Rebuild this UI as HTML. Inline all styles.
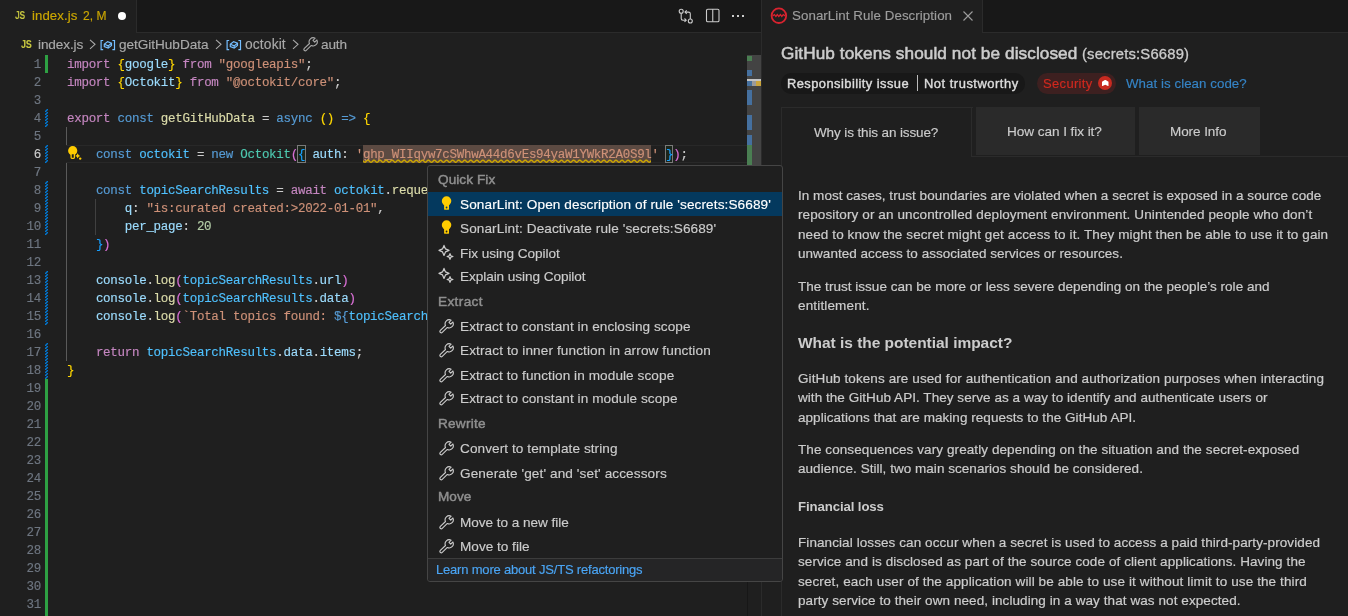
<!DOCTYPE html><html><head><meta charset="utf-8"><style>
*{margin:0;padding:0;box-sizing:border-box}
html,body{width:1348px;height:616px;overflow:hidden;background:#1f1f1f;font-family:"Liberation Sans",sans-serif;color:#cccccc}
div{position:absolute}
svg{position:absolute}
.mono{font-family:"Liberation Mono",monospace;font-size:12.5px;letter-spacing:-0.285px;white-space:pre;line-height:18px;will-change:transform;-webkit-text-stroke:0.15px currentColor}
.ln{left:0;width:41px;text-align:right;color:#6e7681}
.cl{left:67px;height:18px}
.k{color:#c586c0}.s{color:#569cd6}.v{color:#9cdcfe}.f{color:#dcdcaa}.str{color:#ce9178}.c{color:#4ec9b0}.n{color:#b5cea8}
.cst{color:#4fc1ff}.b1{color:#ffd700}.b2{color:#da70d6}.b3{color:#179fff}.p{color:#cccccc}
.t{white-space:pre;will-change:transform}
</style></head><body>
<div style="left:0;top:0;width:761px;height:33px;background:#181818;border-bottom:1px solid #2b2b2b"></div>
<div style="left:0;top:0;width:137px;height:33px;background:#1f1f1f;border-right:1px solid #2b2b2b"></div>
<div class="t" style="left:14.6px;top:10.3px;font-family:'Liberation Sans';font-size:11.8px;line-height:11.8px;font-weight:700;color:#cbcb41;transform:scaleX(0.72);transform-origin:0 0;letter-spacing:-0.3px">JS</div>
<div class="t" style="left:32.04px;top:9.40px;font-family:'Liberation Sans';font-size:13.2px;font-weight:400;line-height:13.2px;color:#cca700;letter-spacing:0.083px;-webkit-text-stroke:0.15px #cca700">index.js</div>
<div class="t" style="left:83.20px;top:10.40px;font-family:'Liberation Sans';font-size:12px;font-weight:400;line-height:12px;color:#cca700;letter-spacing:0.019px;-webkit-text-stroke:0.15px #cca700">2, M</div>
<div style="left:117.7px;top:11.7px;width:8.6px;height:8.6px;border-radius:50%;background:#ffffff"></div>
<svg style="left:678px;top:8px" width="16" height="16" viewBox="0 0 16 16" fill="none" stroke="#cccccc" stroke-width="1.1">
<circle cx="3.2" cy="3.3" r="2"/><circle cx="12.3" cy="13" r="2"/>
<path d="M3.2 5.3 V10.5 Q3.2 12.2 5 12.2 H8"/><path d="M6.5 10.5 L8.2 12.2 L6.5 13.9"/>
<path d="M12.3 11 V5.8 Q12.3 4.1 10.5 4.1 H7"/><path d="M8.7 2.4 L7 4.1 L8.7 5.8"/>
</svg>
<svg style="left:705px;top:8px" width="16" height="16" viewBox="0 0 16 16" fill="none" stroke="#cccccc" stroke-width="1.1">
<rect x="1.5" y="1.2" width="12.5" height="12.5" rx="1.3"/><path d="M7.75 1.2 V13.7"/>
</svg>
<div style="left:731.5px;top:14.7px;width:2px;height:2px;background:#cccccc;box-shadow:5px 0 0 #cccccc,10px 0 0 #cccccc"></div>
<div class="t" style="left:20.8px;top:39.2px;font-family:'Liberation Sans';font-size:11.8px;line-height:11.8px;font-weight:700;color:#cbcb41;transform:scaleX(0.76);transform-origin:0 0;letter-spacing:-0.3px">JS</div>
<div class="t" style="left:38.02px;top:37.90px;font-family:'Liberation Sans';font-size:13.6px;font-weight:400;line-height:13.6px;color:#a9a9a9;letter-spacing:-0.113px;-webkit-text-stroke:0.15px #a9a9a9">index.js</div>
<svg style="left:89.3px;top:39px" width="8" height="11" viewBox="0 0 8 11" fill="none" stroke="#a9a9a9" stroke-width="1.1"><path d="M1 0.8 L6 5.3 L1 9.8"/></svg>
<svg style="left:100px;top:39.5px" width="16" height="11" viewBox="0 0 16 11" fill="none" stroke="#75beff" stroke-width="1.2">
<path d="M3.2 0.5 H1.1 V9.6 H3.2"/><path d="M12.4 0.5 H14.5 V9.6 H12.4"/>
<path d="M4.3 4.3 L7.6 1.6 L11.5 3.2 L11.5 5.4 L8.2 8.1 L4.3 6.5 Z"/><path d="M4.3 4.3 L8.2 5.9 L11.5 3.2 M8.2 5.9 V8.1"/></svg>
<div class="t" style="left:119.02px;top:37.90px;font-family:'Liberation Sans';font-size:13.6px;font-weight:400;line-height:13.6px;color:#a9a9a9;letter-spacing:-0.035px;-webkit-text-stroke:0.15px #a9a9a9">getGitHubData</div>
<svg style="left:214.8px;top:39px" width="8" height="11" viewBox="0 0 8 11" fill="none" stroke="#a9a9a9" stroke-width="1.1"><path d="M1 0.8 L6 5.3 L1 9.8"/></svg>
<svg style="left:226px;top:39.5px" width="16" height="11" viewBox="0 0 16 11" fill="none" stroke="#75beff" stroke-width="1.2">
<path d="M3.2 0.5 H1.1 V9.6 H3.2"/><path d="M12.4 0.5 H14.5 V9.6 H12.4"/>
<path d="M4.3 4.3 L7.6 1.6 L11.5 3.2 L11.5 5.4 L8.2 8.1 L4.3 6.5 Z"/><path d="M4.3 4.3 L8.2 5.9 L11.5 3.2 M8.2 5.9 V8.1"/></svg>
<div class="t" style="left:244.61px;top:37.90px;font-family:'Liberation Sans';font-size:13.8px;font-weight:400;line-height:13.8px;color:#a9a9a9;letter-spacing:0.137px;-webkit-text-stroke:0.15px #a9a9a9">octokit</div>
<svg style="left:291.5px;top:39px" width="8" height="11" viewBox="0 0 8 11" fill="none" stroke="#a9a9a9" stroke-width="1.1"><path d="M1 0.8 L6 5.3 L1 9.8"/></svg>
<svg style="left:302px;top:35.5px" width="16" height="16" viewBox="0 0 16 16" fill="none" stroke="#a9a9a9" stroke-width="1.1" stroke-linejoin="round"><path d="M2.36 12.43 L7.48 7.52 A4.1 4.1 0 0 1 13.14 2.19 L10.98 4.28 L12.72 6.07 L14.88 3.98 A4.1 4.1 0 0 1 9.35 9.46 L4.24 14.37 A1.35 1.35 0 0 1 2.36 12.43 Z"/></svg>
<div class="t" style="left:321.32px;top:37.90px;font-family:'Liberation Sans';font-size:13.6px;font-weight:400;line-height:13.6px;color:#a9a9a9;letter-spacing:-0.156px;-webkit-text-stroke:0.15px #a9a9a9">auth</div>
<div style="left:66px;top:145px;width:681px;height:18px;border-top:1px solid #282828;border-bottom:1px solid #282828"></div>
<div style="left:362.8px;top:145px;width:288.6px;height:18px;background:#5c4a42"></div>
<div style="left:297.4px;top:145px;width:8.2px;height:18px;border:1px solid #7a7a7a;background:rgba(0,100,0,0.1)"></div>
<div style="left:665.3px;top:145px;width:8.2px;height:18px;border:1px solid #7a7a7a;background:rgba(0,100,0,0.1)"></div>
<div style="left:66px;top:127px;width:1px;height:18px;background:#5a5a5a"></div>
<div style="left:66px;top:163px;width:1px;height:198px;background:#5a5a5a"></div>
<div style="left:95px;top:199px;width:1px;height:36px;background:#404040"></div>
<div style="left:45px;top:55px;width:3px;height:18px;background:#2ea043"></div>
<svg style="left:45px;top:109px" width="3" height="18"><defs><pattern id="hp109" width="3" height="3" patternUnits="userSpaceOnUse"><path d="M-1 4 L4 -1" stroke="#0078d4" stroke-width="1.5"/></pattern></defs><rect width="3" height="18" fill="url(#hp109)"/></svg>
<svg style="left:45px;top:145px" width="3" height="18"><defs><pattern id="hp145" width="3" height="3" patternUnits="userSpaceOnUse"><path d="M-1 4 L4 -1" stroke="#0078d4" stroke-width="1.5"/></pattern></defs><rect width="3" height="18" fill="url(#hp145)"/></svg>
<svg style="left:45px;top:181px" width="3" height="54"><defs><pattern id="hp181" width="3" height="3" patternUnits="userSpaceOnUse"><path d="M-1 4 L4 -1" stroke="#0078d4" stroke-width="1.5"/></pattern></defs><rect width="3" height="54" fill="url(#hp181)"/></svg>
<svg style="left:45px;top:271px" width="3" height="54"><defs><pattern id="hp271" width="3" height="3" patternUnits="userSpaceOnUse"><path d="M-1 4 L4 -1" stroke="#0078d4" stroke-width="1.5"/></pattern></defs><rect width="3" height="54" fill="url(#hp271)"/></svg>
<svg style="left:45px;top:343px" width="3" height="36"><defs><pattern id="hp343" width="3" height="3" patternUnits="userSpaceOnUse"><path d="M-1 4 L4 -1" stroke="#0078d4" stroke-width="1.5"/></pattern></defs><rect width="3" height="36" fill="url(#hp343)"/></svg>
<div style="left:45px;top:379px;width:3px;height:237px;background:#2ea043"></div>
<div class="mono ln" style="top:56px;color:#6e7681">1</div>
<div class="mono ln" style="top:74px;color:#6e7681">2</div>
<div class="mono ln" style="top:92px;color:#6e7681">3</div>
<div class="mono ln" style="top:110px;color:#6e7681">4</div>
<div class="mono ln" style="top:128px;color:#6e7681">5</div>
<div class="mono ln" style="top:146px;color:#cccccc">6</div>
<div class="mono ln" style="top:164px;color:#6e7681">7</div>
<div class="mono ln" style="top:182px;color:#6e7681">8</div>
<div class="mono ln" style="top:200px;color:#6e7681">9</div>
<div class="mono ln" style="top:218px;color:#6e7681">10</div>
<div class="mono ln" style="top:236px;color:#6e7681">11</div>
<div class="mono ln" style="top:254px;color:#6e7681">12</div>
<div class="mono ln" style="top:272px;color:#6e7681">13</div>
<div class="mono ln" style="top:290px;color:#6e7681">14</div>
<div class="mono ln" style="top:308px;color:#6e7681">15</div>
<div class="mono ln" style="top:326px;color:#6e7681">16</div>
<div class="mono ln" style="top:344px;color:#6e7681">17</div>
<div class="mono ln" style="top:362px;color:#6e7681">18</div>
<div class="mono ln" style="top:380px;color:#6e7681">19</div>
<div class="mono ln" style="top:398px;color:#6e7681">20</div>
<div class="mono ln" style="top:416px;color:#6e7681">21</div>
<div class="mono ln" style="top:434px;color:#6e7681">22</div>
<div class="mono ln" style="top:452px;color:#6e7681">23</div>
<div class="mono ln" style="top:470px;color:#6e7681">24</div>
<div class="mono ln" style="top:488px;color:#6e7681">25</div>
<div class="mono ln" style="top:506px;color:#6e7681">26</div>
<div class="mono ln" style="top:524px;color:#6e7681">27</div>
<div class="mono ln" style="top:542px;color:#6e7681">28</div>
<div class="mono ln" style="top:560px;color:#6e7681">29</div>
<div class="mono ln" style="top:578px;color:#6e7681">30</div>
<div class="mono ln" style="top:596px;color:#6e7681">31</div>
<div class="mono cl p" style="top:56px"><span class="k">import</span> <span class="b1">{</span><span class="v">google</span><span class="b1">}</span> <span class="k">from</span> <span class="str">&quot;googleapis&quot;</span><span class="p">;</span></div>
<div class="mono cl p" style="top:74px"><span class="k">import</span> <span class="b1">{</span><span class="v">Octokit</span><span class="b1">}</span> <span class="k">from</span> <span class="str">&quot;@octokit/core&quot;</span><span class="p">;</span></div>
<div class="mono cl p" style="top:110px"><span class="k">export</span> <span class="s">const</span> <span class="f">getGitHubData</span> <span class="p">=</span> <span class="s">async</span> <span class="b1">()</span> <span class="s">=&gt;</span> <span class="b1">{</span></div>
<div class="mono cl p" style="top:146px">    <span class="s">const</span> <span class="cst">octokit</span> <span class="p">=</span> <span class="s">new</span> <span class="c">Octokit</span><span class="b2">(</span><span class="b3">{</span> <span class="v">auth</span><span class="p">:</span> <span class="str">&#x27;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&#x27;</span> <span class="b3">}</span><span class="b2">)</span><span class="p">;</span></div>
<div class="mono cl p" style="top:182px">    <span class="s">const</span> <span class="cst">topicSearchResults</span> <span class="p">=</span> <span class="k">await</span> <span class="cst">octokit</span><span class="p">.</span><span class="f">request</span><span class="b2">(</span><span class="str">&quot;GET /search/topics&quot;</span><span class="p">, </span><span class="b3">{</span></div>
<div class="mono cl p" style="top:200px">        <span class="v">q</span><span class="p">:</span> <span class="str">&quot;is:curated created:&gt;2022-01-01&quot;</span><span class="p">,</span></div>
<div class="mono cl p" style="top:218px">        <span class="v">per_page</span><span class="p">:</span> <span class="n">20</span></div>
<div class="mono cl p" style="top:236px">    <span class="b3">}</span><span class="b2">)</span></div>
<div class="mono cl p" style="top:272px">    <span class="v">console</span><span class="p">.</span><span class="f">log</span><span class="b2">(</span><span class="cst">topicSearchResults</span><span class="p">.</span><span class="v">url</span><span class="b2">)</span></div>
<div class="mono cl p" style="top:290px">    <span class="v">console</span><span class="p">.</span><span class="f">log</span><span class="b2">(</span><span class="cst">topicSearchResults</span><span class="p">.</span><span class="v">data</span><span class="b2">)</span></div>
<div class="mono cl p" style="top:308px">    <span class="v">console</span><span class="p">.</span><span class="f">log</span><span class="b2">(</span><span class="str">`Total topics found: </span><span class="s">${</span><span class="cst">topicSearchResults</span><span class="p">.</span><span class="v">data</span><span class="s">}</span><span class="str">`</span><span class="b2">)</span></div>
<div class="mono cl p" style="top:344px">    <span class="k">return</span> <span class="cst">topicSearchResults</span><span class="p">.</span><span class="v">data</span><span class="p">.</span><span class="v">items</span><span class="p">;</span></div>
<div class="mono cl p" style="top:362px"><span class="b1">}</span></div>
<svg style="left:362.8px;top:159px" width="288.6" height="5"><path d="M0.0 1.79 L0.5 2.32 L1.0 2.82 L1.5 3.16 L2.0 3.24 L2.5 3.05 L3.0 2.64 L3.5 2.10 L4.0 1.60 L4.5 1.25 L5.0 1.15 L5.5 1.33 L6.0 1.74 L6.5 2.27 L7.0 2.78 L7.5 3.14 L8.0 3.25 L8.5 3.08 L9.0 2.69 L9.5 2.16 L10.0 1.64 L10.5 1.28 L11.0 1.15 L11.5 1.30 L12.0 1.69 L12.5 2.21 L13.0 2.73 L13.5 3.11 L14.0 3.25 L14.5 3.11 L15.0 2.73 L15.5 2.21 L16.0 1.69 L16.5 1.30 L17.0 1.15 L17.5 1.28 L18.0 1.64 L18.5 2.16 L19.0 2.69 L19.5 3.08 L20.0 3.25 L20.5 3.14 L21.0 2.78 L21.5 2.27 L22.0 1.74 L22.5 1.33 L23.0 1.15 L23.5 1.25 L24.0 1.60 L24.5 2.10 L25.0 2.64 L25.5 3.05 L26.0 3.24 L26.5 3.16 L27.0 2.82 L27.5 2.32 L28.0 1.79 L28.5 1.36 L29.0 1.16 L29.5 1.23 L30.0 1.55 L30.5 2.05 L31.0 2.59 L31.5 3.02 L32.0 3.24 L32.5 3.18 L33.0 2.87 L33.5 2.38 L34.0 1.84 L34.5 1.40 L35.0 1.17 L35.5 1.21 L36.0 1.51 L36.5 2.00 L37.0 2.53 L37.5 2.98 L38.0 3.23 L38.5 3.20 L39.0 2.91 L39.5 2.43 L40.0 1.89 L40.5 1.43 L41.0 1.18 L41.5 1.19 L42.0 1.47 L42.5 1.94 L43.0 2.48 L43.5 2.95 L44.0 3.21 L44.5 3.21 L45.0 2.95 L45.5 2.48 L46.0 1.94 L46.5 1.47 L47.0 1.19 L47.5 1.18 L48.0 1.43 L48.5 1.89 L49.0 2.43 L49.5 2.91 L50.0 3.20 L50.5 3.23 L51.0 2.98 L51.5 2.53 L52.0 2.00 L52.5 1.51 L53.0 1.21 L53.5 1.17 L54.0 1.40 L54.5 1.84 L55.0 2.38 L55.5 2.87 L56.0 3.18 L56.5 3.24 L57.0 3.02 L57.5 2.59 L58.0 2.05 L58.5 1.55 L59.0 1.23 L59.5 1.16 L60.0 1.36 L60.5 1.79 L61.0 2.32 L61.5 2.82 L62.0 3.16 L62.5 3.24 L63.0 3.05 L63.5 2.64 L64.0 2.10 L64.5 1.60 L65.0 1.25 L65.5 1.15 L66.0 1.33 L66.5 1.74 L67.0 2.27 L67.5 2.78 L68.0 3.14 L68.5 3.25 L69.0 3.08 L69.5 2.69 L70.0 2.16 L70.5 1.64 L71.0 1.28 L71.5 1.15 L72.0 1.30 L72.5 1.69 L73.0 2.21 L73.5 2.73 L74.0 3.11 L74.5 3.25 L75.0 3.11 L75.5 2.73 L76.0 2.21 L76.5 1.69 L77.0 1.30 L77.5 1.15 L78.0 1.28 L78.5 1.64 L79.0 2.16 L79.5 2.69 L80.0 3.08 L80.5 3.25 L81.0 3.14 L81.5 2.78 L82.0 2.27 L82.5 1.74 L83.0 1.33 L83.5 1.15 L84.0 1.25 L84.5 1.60 L85.0 2.10 L85.5 2.64 L86.0 3.05 L86.5 3.24 L87.0 3.16 L87.5 2.82 L88.0 2.32 L88.5 1.79 L89.0 1.36 L89.5 1.16 L90.0 1.23 L90.5 1.55 L91.0 2.05 L91.5 2.59 L92.0 3.02 L92.5 3.24 L93.0 3.18 L93.5 2.87 L94.0 2.38 L94.5 1.84 L95.0 1.40 L95.5 1.17 L96.0 1.21 L96.5 1.51 L97.0 2.00 L97.5 2.53 L98.0 2.98 L98.5 3.23 L99.0 3.20 L99.5 2.91 L100.0 2.43 L100.5 1.89 L101.0 1.43 L101.5 1.18 L102.0 1.19 L102.5 1.47 L103.0 1.94 L103.5 2.48 L104.0 2.95 L104.5 3.21 L105.0 3.21 L105.5 2.95 L106.0 2.48 L106.5 1.94 L107.0 1.47 L107.5 1.19 L108.0 1.18 L108.5 1.43 L109.0 1.89 L109.5 2.43 L110.0 2.91 L110.5 3.20 L111.0 3.23 L111.5 2.98 L112.0 2.53 L112.5 2.00 L113.0 1.51 L113.5 1.21 L114.0 1.17 L114.5 1.40 L115.0 1.84 L115.5 2.38 L116.0 2.87 L116.5 3.18 L117.0 3.24 L117.5 3.02 L118.0 2.59 L118.5 2.05 L119.0 1.55 L119.5 1.23 L120.0 1.16 L120.5 1.36 L121.0 1.79 L121.5 2.32 L122.0 2.82 L122.5 3.16 L123.0 3.24 L123.5 3.05 L124.0 2.64 L124.5 2.10 L125.0 1.60 L125.5 1.25 L126.0 1.15 L126.5 1.33 L127.0 1.74 L127.5 2.27 L128.0 2.78 L128.5 3.14 L129.0 3.25 L129.5 3.08 L130.0 2.69 L130.5 2.16 L131.0 1.64 L131.5 1.28 L132.0 1.15 L132.5 1.30 L133.0 1.69 L133.5 2.21 L134.0 2.73 L134.5 3.11 L135.0 3.25 L135.5 3.11 L136.0 2.73 L136.5 2.21 L137.0 1.69 L137.5 1.30 L138.0 1.15 L138.5 1.28 L139.0 1.64 L139.5 2.16 L140.0 2.69 L140.5 3.08 L141.0 3.25 L141.5 3.14 L142.0 2.78 L142.5 2.27 L143.0 1.74 L143.5 1.33 L144.0 1.15 L144.5 1.25 L145.0 1.60 L145.5 2.10 L146.0 2.64 L146.5 3.05 L147.0 3.24 L147.5 3.16 L148.0 2.82 L148.5 2.32 L149.0 1.79 L149.5 1.36 L150.0 1.16 L150.5 1.23 L151.0 1.55 L151.5 2.05 L152.0 2.59 L152.5 3.02 L153.0 3.24 L153.5 3.18 L154.0 2.87 L154.5 2.38 L155.0 1.84 L155.5 1.40 L156.0 1.17 L156.5 1.21 L157.0 1.51 L157.5 2.00 L158.0 2.53 L158.5 2.98 L159.0 3.23 L159.5 3.20 L160.0 2.91 L160.5 2.43 L161.0 1.89 L161.5 1.43 L162.0 1.18 L162.5 1.19 L163.0 1.47 L163.5 1.94 L164.0 2.48 L164.5 2.95 L165.0 3.21 L165.5 3.21 L166.0 2.95 L166.5 2.48 L167.0 1.94 L167.5 1.47 L168.0 1.19 L168.5 1.18 L169.0 1.43 L169.5 1.89 L170.0 2.43 L170.5 2.91 L171.0 3.20 L171.5 3.23 L172.0 2.98 L172.5 2.53 L173.0 2.00 L173.5 1.51 L174.0 1.21 L174.5 1.17 L175.0 1.40 L175.5 1.84 L176.0 2.38 L176.5 2.87 L177.0 3.18 L177.5 3.24 L178.0 3.02 L178.5 2.59 L179.0 2.05 L179.5 1.55 L180.0 1.23 L180.5 1.16 L181.0 1.36 L181.5 1.79 L182.0 2.32 L182.5 2.82 L183.0 3.16 L183.5 3.24 L184.0 3.05 L184.5 2.64 L185.0 2.10 L185.5 1.60 L186.0 1.25 L186.5 1.15 L187.0 1.33 L187.5 1.74 L188.0 2.27 L188.5 2.78 L189.0 3.14 L189.5 3.25 L190.0 3.08 L190.5 2.69 L191.0 2.16 L191.5 1.64 L192.0 1.28 L192.5 1.15 L193.0 1.30 L193.5 1.69 L194.0 2.21 L194.5 2.73 L195.0 3.11 L195.5 3.25 L196.0 3.11 L196.5 2.73 L197.0 2.21 L197.5 1.69 L198.0 1.30 L198.5 1.15 L199.0 1.28 L199.5 1.64 L200.0 2.16 L200.5 2.69 L201.0 3.08 L201.5 3.25 L202.0 3.14 L202.5 2.78 L203.0 2.27 L203.5 1.74 L204.0 1.33 L204.5 1.15 L205.0 1.25 L205.5 1.60 L206.0 2.10 L206.5 2.64 L207.0 3.05 L207.5 3.24 L208.0 3.16 L208.5 2.82 L209.0 2.32 L209.5 1.79 L210.0 1.36 L210.5 1.16 L211.0 1.23 L211.5 1.55 L212.0 2.05 L212.5 2.59 L213.0 3.02 L213.5 3.24 L214.0 3.18 L214.5 2.87 L215.0 2.38 L215.5 1.84 L216.0 1.40 L216.5 1.17 L217.0 1.21 L217.5 1.51 L218.0 2.00 L218.5 2.53 L219.0 2.98 L219.5 3.23 L220.0 3.20 L220.5 2.91 L221.0 2.43 L221.5 1.89 L222.0 1.43 L222.5 1.18 L223.0 1.19 L223.5 1.47 L224.0 1.94 L224.5 2.48 L225.0 2.95 L225.5 3.21 L226.0 3.21 L226.5 2.95 L227.0 2.48 L227.5 1.94 L228.0 1.47 L228.5 1.19 L229.0 1.18 L229.5 1.43 L230.0 1.89 L230.5 2.43 L231.0 2.91 L231.5 3.20 L232.0 3.23 L232.5 2.98 L233.0 2.53 L233.5 2.00 L234.0 1.51 L234.5 1.21 L235.0 1.17 L235.5 1.40 L236.0 1.84 L236.5 2.38 L237.0 2.87 L237.5 3.18 L238.0 3.24 L238.5 3.02 L239.0 2.59 L239.5 2.05 L240.0 1.55 L240.5 1.23 L241.0 1.16 L241.5 1.36 L242.0 1.79 L242.5 2.32 L243.0 2.82 L243.5 3.16 L244.0 3.24 L244.5 3.05 L245.0 2.64 L245.5 2.10 L246.0 1.60 L246.5 1.25 L247.0 1.15 L247.5 1.33 L248.0 1.74 L248.5 2.27 L249.0 2.78 L249.5 3.14 L250.0 3.25 L250.5 3.08 L251.0 2.69 L251.5 2.16 L252.0 1.64 L252.5 1.28 L253.0 1.15 L253.5 1.30 L254.0 1.69 L254.5 2.21 L255.0 2.73 L255.5 3.11 L256.0 3.25 L256.5 3.11 L257.0 2.73 L257.5 2.21 L258.0 1.69 L258.5 1.30 L259.0 1.15 L259.5 1.28 L260.0 1.64 L260.5 2.16 L261.0 2.69 L261.5 3.08 L262.0 3.25 L262.5 3.14 L263.0 2.78 L263.5 2.27 L264.0 1.74 L264.5 1.33 L265.0 1.15 L265.5 1.25 L266.0 1.60 L266.5 2.10 L267.0 2.64 L267.5 3.05 L268.0 3.24 L268.5 3.16 L269.0 2.82 L269.5 2.32 L270.0 1.79 L270.5 1.36 L271.0 1.16 L271.5 1.23 L272.0 1.55 L272.5 2.05 L273.0 2.59 L273.5 3.02 L274.0 3.24 L274.5 3.18 L275.0 2.87 L275.5 2.38 L276.0 1.84 L276.5 1.40 L277.0 1.17 L277.5 1.21 L278.0 1.51 L278.5 2.00 L279.0 2.53 L279.5 2.98 L280.0 3.23 L280.5 3.20 L281.0 2.91 L281.5 2.43 L282.0 1.89 L282.5 1.43 L283.0 1.18 L283.5 1.19 L284.0 1.47 L284.5 1.94 L285.0 2.48 L285.5 2.95 L286.0 3.21 L286.5 3.21 L287.0 2.95 L287.5 2.48 L288.0 1.94 L288.5 1.47" stroke="#cca700" stroke-width="1.4" fill="none" stroke-linejoin="round"/></svg>
<svg style="left:66px;top:145px" width="18" height="18" viewBox="0 0 18 18">
<circle cx="6.7" cy="5.7" r="4.6" fill="#ffcc00"/>
<path d="M5.1 8.5 H8.4 V12.6 Q8.4 13.4 7.6 13.4 H5.9 Q5.1 13.4 5.1 12.6Z" fill="#1f1f1f" stroke="#ffcc00" stroke-width="1.3"/>
<path d="M11.7 8.3 L12.6 10.1 L14.2 10.9 L12.6 11.7 L11.7 13.4 L10.8 11.7 L9.2 10.9 L10.8 10.1Z" fill="#ffcc00"/>
<circle cx="14.2" cy="13.6" r="1.2" fill="#ffcc00"/></svg>
<div style="left:747px;top:55px;width:1px;height:561px;background:#171717"></div>
<div style="left:747px;top:55px;width:14px;height:290px;background:#434343"></div>
<div style="left:747px;top:55.5px;width:5px;height:5.5px;background:#4a7e52"></div>
<div style="left:747px;top:69.8px;width:5px;height:6.200000000000003px;background:#45709f"></div>
<div style="left:747px;top:79px;width:14px;height:2px;background:#c4c4c4"></div>
<div style="left:747px;top:81px;width:5px;height:5px;background:#45709f"></div>
<div style="left:752px;top:81px;width:4px;height:5px;background:#9a9a9a"></div>
<div style="left:756px;top:81px;width:5px;height:5px;background:#c9a43c"></div>
<div style="left:747px;top:90px;width:5px;height:15px;background:#45709f"></div>
<div style="left:747px;top:115px;width:5px;height:15px;background:#45709f"></div>
<div style="left:747px;top:135px;width:5px;height:10px;background:#45709f"></div>
<div style="left:747px;top:145px;width:5px;height:255px;background:#4a7e52"></div>
<div style="left:761px;top:0;width:1px;height:616px;background:#2b2b2b"></div>
<div style="left:762px;top:0;width:586px;height:33px;background:#181818;border-bottom:1px solid #2b2b2b"></div>
<div style="left:762px;top:0;width:221px;height:33px;background:#1f1f1f;border-right:1px solid #2b2b2b"></div>
<svg style="left:770px;top:7px" width="18" height="18" viewBox="0 0 18 18" fill="none" stroke="#d8232f" stroke-width="1.8">
<circle cx="8.9" cy="8.7" r="7.3"/><path d="M2.6 9 L4.4 7.6 L5.9 9.4 L7.3 7.6 L8.8 9.4 L10.4 7.6 L11.8 9.4 L13.3 7.6 L15.2 9" stroke-width="1.3"/></svg>
<div class="t" style="left:792.34px;top:9.20px;font-family:'Liberation Sans';font-size:13.3px;font-weight:400;line-height:13.3px;color:#9d9d9d;letter-spacing:0.073px;-webkit-text-stroke:0.15px #9d9d9d">SonarLint Rule Description</div>
<svg style="left:963px;top:11px" width="10" height="10" viewBox="0 0 10 10" stroke="#9d9d9d" stroke-width="1.1"><path d="M0.5 0.5 L9.5 9.5 M9.5 0.5 L0.5 9.5"/></svg>
<div class="t" style="left:780.74px;top:44.80px;font-family:'Liberation Sans';font-size:17.2px;font-weight:400;line-height:17.2px;color:#cccccc;letter-spacing:0.083px;-webkit-text-stroke:0.55px #cccccc">GitHub tokens should not be disclosed</div>
<div class="t" style="left:1082.26px;top:46.80px;font-family:'Liberation Sans';font-size:14.8px;font-weight:400;line-height:14.8px;color:#cccccc;letter-spacing:0.182px;-webkit-text-stroke:0.3px #cccccc">(secrets:S6689)</div>
<div style="left:781px;top:73px;width:244px;height:20.5px;border-radius:10px;background:#181818"></div>
<div class="t" style="left:787.15px;top:77.60px;font-family:'Liberation Sans';font-size:12.9px;font-weight:400;line-height:12.9px;color:#dddddd;letter-spacing:0.442px;-webkit-text-stroke:0.4px #dddddd">Responsibility issue</div>
<div style="left:916.5px;top:75px;width:1px;height:15.5px;background:#bbbbbb"></div>
<div class="t" style="left:923.86px;top:77.60px;font-family:'Liberation Sans';font-size:12.9px;font-weight:400;line-height:12.9px;color:#dddddd;letter-spacing:0.529px;-webkit-text-stroke:0.4px #dddddd">Not trustworthy</div>
<div style="left:1037px;top:72.8px;width:79px;height:20.8px;border-radius:10.4px;background:#3d2020"></div>
<div class="t" style="left:1043.05px;top:77.20px;font-family:'Liberation Sans';font-size:13px;font-weight:400;line-height:13px;color:#d0291f;letter-spacing:0.333px;-webkit-text-stroke:0.15px #d0291f">Security</div>
<div style="left:1098px;top:76.2px;width:14.2px;height:14.2px;border-radius:50%;background:#c82a20"></div>
<div style="left:1102px;top:79.8px;width:6.5px;height:6.5px;background:#ffffff;clip-path:polygon(50% 0,100% 30%,100% 100%,50% 78%,0 100%,0 30%)"></div>
<div class="t" style="left:1125.63px;top:77.20px;font-family:'Liberation Sans';font-size:13.3px;font-weight:400;line-height:13.3px;color:#3584c6;letter-spacing:0.053px;-webkit-text-stroke:0.15px #3584c6">What is clean code?</div>
<div style="left:781px;top:107px;width:192px;height:600px;border:1px solid #2b2b2b;border-bottom:none;border-right:none;background:#1f1f1f"></div>
<div style="left:971px;top:107px;width:1px;height:49px;background:#2b2b2b"></div>
<div style="left:971px;top:156px;width:377px;height:1px;background:#2b2b2b"></div>
<div style="left:976px;top:107px;width:159px;height:48px;background:#2a2a2a"></div>
<div style="left:1138.5px;top:107px;width:121px;height:48px;background:#2a2a2a"></div>
<div class="t" style="left:813.53px;top:125.80px;font-family:'Liberation Sans';font-size:13.5px;font-weight:400;line-height:13.5px;color:#cccccc;letter-spacing:-0.121px;-webkit-text-stroke:0.15px #cccccc">Why is this an issue?</div>
<div class="t" style="left:1007.32px;top:124.80px;font-family:'Liberation Sans';font-size:13.6px;font-weight:400;line-height:13.6px;color:#cccccc;letter-spacing:-0.066px;-webkit-text-stroke:0.15px #cccccc">How can I fix it?</div>
<div class="t" style="left:1169.83px;top:124.80px;font-family:'Liberation Sans';font-size:13.5px;font-weight:400;line-height:13.5px;color:#cccccc;letter-spacing:-0.066px;-webkit-text-stroke:0.15px #cccccc">More Info</div>
<div class="t" style="left:797.83px;top:188.80px;font-family:'Liberation Sans';font-size:13.5px;font-weight:400;line-height:13.5px;color:#cccccc;letter-spacing:0.038px;-webkit-text-stroke:0.2px #cccccc">In most cases, trust boundaries are violated when a secret is exposed in a source code</div>
<div class="t" style="left:797.83px;top:208.10px;font-family:'Liberation Sans';font-size:13.5px;font-weight:400;line-height:13.5px;color:#cccccc;letter-spacing:0.114px;-webkit-text-stroke:0.2px #cccccc">repository or an uncontrolled deployment environment. Unintended people who don’t</div>
<div class="t" style="left:797.83px;top:227.80px;font-family:'Liberation Sans';font-size:13.5px;font-weight:400;line-height:13.5px;color:#cccccc;letter-spacing:0.100px;-webkit-text-stroke:0.2px #cccccc">need to know the secret might get access to it. They might then be able to use it to gain</div>
<div class="t" style="left:797.83px;top:246.70px;font-family:'Liberation Sans';font-size:13.5px;font-weight:400;line-height:13.5px;color:#cccccc;letter-spacing:0.029px;-webkit-text-stroke:0.2px #cccccc">unwanted access to associated services or resources.</div>
<div class="t" style="left:797.83px;top:279.70px;font-family:'Liberation Sans';font-size:13.5px;font-weight:400;line-height:13.5px;color:#cccccc;letter-spacing:0.026px;-webkit-text-stroke:0.2px #cccccc">The trust issue can be more or less severe depending on the people’s role and</div>
<div class="t" style="left:797.83px;top:299.00px;font-family:'Liberation Sans';font-size:13.5px;font-weight:400;line-height:13.5px;color:#cccccc;letter-spacing:0.155px;-webkit-text-stroke:0.2px #cccccc">entitlement.</div>
<div class="t" style="left:797.83px;top:371.90px;font-family:'Liberation Sans';font-size:13.5px;font-weight:400;line-height:13.5px;color:#cccccc;letter-spacing:0.096px;-webkit-text-stroke:0.2px #cccccc">GitHub tokens are used for authentication and authorization purposes when interacting</div>
<div class="t" style="left:797.83px;top:391.30px;font-family:'Liberation Sans';font-size:13.5px;font-weight:400;line-height:13.5px;color:#cccccc;letter-spacing:0.049px;-webkit-text-stroke:0.2px #cccccc">with the GitHub API. They serve as a way to identify and authenticate users or</div>
<div class="t" style="left:797.83px;top:410.90px;font-family:'Liberation Sans';font-size:13.5px;font-weight:400;line-height:13.5px;color:#cccccc;letter-spacing:0.048px;-webkit-text-stroke:0.2px #cccccc">applications that are making requests to the GitHub API.</div>
<div class="t" style="left:797.83px;top:443.30px;font-family:'Liberation Sans';font-size:13.5px;font-weight:400;line-height:13.5px;color:#cccccc;letter-spacing:0.085px;-webkit-text-stroke:0.2px #cccccc">The consequences vary greatly depending on the situation and the secret-exposed</div>
<div class="t" style="left:797.83px;top:462.10px;font-family:'Liberation Sans';font-size:13.5px;font-weight:400;line-height:13.5px;color:#cccccc;letter-spacing:0.035px;-webkit-text-stroke:0.2px #cccccc">audience. Still, two main scenarios should be considered.</div>
<div class="t" style="left:797.83px;top:535.90px;font-family:'Liberation Sans';font-size:13.5px;font-weight:400;line-height:13.5px;color:#cccccc;letter-spacing:0.085px;-webkit-text-stroke:0.2px #cccccc">Financial losses can occur when a secret is used to access a paid third-party-provided</div>
<div class="t" style="left:797.83px;top:555.30px;font-family:'Liberation Sans';font-size:13.5px;font-weight:400;line-height:13.5px;color:#cccccc;letter-spacing:0.091px;-webkit-text-stroke:0.2px #cccccc">service and is disclosed as part of the source code of client applications. Having the</div>
<div class="t" style="left:797.83px;top:574.70px;font-family:'Liberation Sans';font-size:13.5px;font-weight:400;line-height:13.5px;color:#cccccc;letter-spacing:0.119px;-webkit-text-stroke:0.2px #cccccc">secret, each user of the application will be able to use it without limit to use the third</div>
<div class="t" style="left:797.83px;top:594.10px;font-family:'Liberation Sans';font-size:13.5px;font-weight:400;line-height:13.5px;color:#cccccc;letter-spacing:0.079px;-webkit-text-stroke:0.2px #cccccc">party service to their own need, including in a way that was not expected.</div>
<div class="t" style="left:797.73px;top:335.10px;font-family:'Liberation Sans';font-size:15.5px;font-weight:700;line-height:15.5px;color:#cccccc;letter-spacing:-0.032px">What is the potential impact?</div>
<div class="t" style="left:797.94px;top:499.60px;font-family:'Liberation Sans';font-size:13.2px;font-weight:700;line-height:13.2px;color:#cccccc;letter-spacing:-0.101px">Financial loss</div>
<div style="left:427px;top:165px;width:356px;height:417px;background:#1f1f1f;border:1px solid #454545;border-radius:3px;overflow:hidden"></div>
<div style="left:428px;top:192px;width:354px;height:24px;background:#04395e"></div>
<div style="left:428px;top:557.5px;width:354px;height:23.5px;background:#252526;border-top:1px solid #3c3c3c;border-radius:0 0 3px 3px"></div>
<div class="t" style="left:437.82px;top:173.30px;font-family:'Liberation Sans';font-size:13.6px;font-weight:400;line-height:13.6px;color:#8f8f8f;letter-spacing:0.068px;-webkit-text-stroke:0.45px #8f8f8f">Quick Fix</div>
<div class="t" style="left:459.82px;top:198.30px;font-family:'Liberation Sans';font-size:13.6px;font-weight:400;line-height:13.6px;color:#ffffff;letter-spacing:0.097px;-webkit-text-stroke:0.15px #ffffff">SonarLint: Open description of rule &#x27;secrets:S6689&#x27;</div>
<svg style="left:438px;top:194.3px" width="16" height="18" viewBox="0 0 16 18"><circle cx="8.55" cy="7.0" r="4.75" fill="#ffcc00"/><path d="M6.1 9.5 H11 V14.9 Q11 15.8 10.1 15.8 H7 Q6.1 15.8 6.1 14.9Z" fill="#ffcc00"/><ellipse cx="8.55" cy="13.5" rx="0.9" ry="1.1" fill="#04395e"/></svg>
<div class="t" style="left:459.82px;top:222.00px;font-family:'Liberation Sans';font-size:13.6px;font-weight:400;line-height:13.6px;color:#cccccc;letter-spacing:0.093px;-webkit-text-stroke:0.15px #cccccc">SonarLint: Deactivate rule &#x27;secrets:S6689&#x27;</div>
<svg style="left:438px;top:218px" width="16" height="18" viewBox="0 0 16 18"><circle cx="8.55" cy="7.0" r="4.75" fill="#ffcc00"/><path d="M6.1 9.5 H11 V14.9 Q11 15.8 10.1 15.8 H7 Q6.1 15.8 6.1 14.9Z" fill="#ffcc00"/><ellipse cx="8.55" cy="13.5" rx="0.9" ry="1.1" fill="#1f1f1f"/></svg>
<div class="t" style="left:459.82px;top:246.50px;font-family:'Liberation Sans';font-size:13.6px;font-weight:400;line-height:13.6px;color:#cccccc;letter-spacing:-0.050px;-webkit-text-stroke:0.15px #cccccc">Fix using Copilot</div>
<svg style="left:438px;top:242.5px" width="16" height="18" viewBox="0 0 16 18" fill="none" stroke="#cccccc" stroke-width="1.2" stroke-linejoin="round"><path d="M6 2.4 L7.5 5.9 L11 7.4 L7.5 8.9 L6 12.4 L4.5 8.9 L1 7.4 L4.5 5.9Z"/><path d="M12 10.6 L12.8 12.7 L14.9 13.5 L12.8 14.3 L12 16.4 L11.2 14.3 L9.1 13.5 L11.2 12.7Z"/></svg>
<div class="t" style="left:459.82px;top:270.00px;font-family:'Liberation Sans';font-size:13.6px;font-weight:400;line-height:13.6px;color:#cccccc;letter-spacing:-0.068px;-webkit-text-stroke:0.15px #cccccc">Explain using Copilot</div>
<svg style="left:438px;top:266px" width="16" height="18" viewBox="0 0 16 18" fill="none" stroke="#cccccc" stroke-width="1.2" stroke-linejoin="round"><path d="M6 2.4 L7.5 5.9 L11 7.4 L7.5 8.9 L6 12.4 L4.5 8.9 L1 7.4 L4.5 5.9Z"/><path d="M12 10.6 L12.8 12.7 L14.9 13.5 L12.8 14.3 L12 16.4 L11.2 14.3 L9.1 13.5 L11.2 12.7Z"/></svg>
<div class="t" style="left:437.82px;top:295.00px;font-family:'Liberation Sans';font-size:13.6px;font-weight:400;line-height:13.6px;color:#8f8f8f;letter-spacing:0.365px;-webkit-text-stroke:0.45px #8f8f8f">Extract</div>
<div class="t" style="left:459.82px;top:320.20px;font-family:'Liberation Sans';font-size:13.6px;font-weight:400;line-height:13.6px;color:#cccccc;letter-spacing:0.062px;-webkit-text-stroke:0.15px #cccccc">Extract to constant in enclosing scope</div>
<svg style="left:438px;top:318.2px" width="16" height="16" viewBox="0 0 16 16" fill="none" stroke="#cccccc" stroke-width="1.1" stroke-linejoin="round"><path d="M2.36 12.43 L7.48 7.52 A4.1 4.1 0 0 1 13.14 2.19 L10.98 4.28 L12.72 6.07 L14.88 3.98 A4.1 4.1 0 0 1 9.35 9.46 L4.24 14.37 A1.35 1.35 0 0 1 2.36 12.43 Z"/></svg>
<div class="t" style="left:459.82px;top:344.30px;font-family:'Liberation Sans';font-size:13.6px;font-weight:400;line-height:13.6px;color:#cccccc;letter-spacing:0.104px;-webkit-text-stroke:0.15px #cccccc">Extract to inner function in arrow function</div>
<svg style="left:438px;top:342.3px" width="16" height="16" viewBox="0 0 16 16" fill="none" stroke="#cccccc" stroke-width="1.1" stroke-linejoin="round"><path d="M2.36 12.43 L7.48 7.52 A4.1 4.1 0 0 1 13.14 2.19 L10.98 4.28 L12.72 6.07 L14.88 3.98 A4.1 4.1 0 0 1 9.35 9.46 L4.24 14.37 A1.35 1.35 0 0 1 2.36 12.43 Z"/></svg>
<div class="t" style="left:459.82px;top:368.50px;font-family:'Liberation Sans';font-size:13.6px;font-weight:400;line-height:13.6px;color:#cccccc;letter-spacing:0.077px;-webkit-text-stroke:0.15px #cccccc">Extract to function in module scope</div>
<svg style="left:438px;top:366.5px" width="16" height="16" viewBox="0 0 16 16" fill="none" stroke="#cccccc" stroke-width="1.1" stroke-linejoin="round"><path d="M2.36 12.43 L7.48 7.52 A4.1 4.1 0 0 1 13.14 2.19 L10.98 4.28 L12.72 6.07 L14.88 3.98 A4.1 4.1 0 0 1 9.35 9.46 L4.24 14.37 A1.35 1.35 0 0 1 2.36 12.43 Z"/></svg>
<div class="t" style="left:459.82px;top:392.40px;font-family:'Liberation Sans';font-size:13.6px;font-weight:400;line-height:13.6px;color:#cccccc;letter-spacing:0.063px;-webkit-text-stroke:0.15px #cccccc">Extract to constant in module scope</div>
<svg style="left:438px;top:390.4px" width="16" height="16" viewBox="0 0 16 16" fill="none" stroke="#cccccc" stroke-width="1.1" stroke-linejoin="round"><path d="M2.36 12.43 L7.48 7.52 A4.1 4.1 0 0 1 13.14 2.19 L10.98 4.28 L12.72 6.07 L14.88 3.98 A4.1 4.1 0 0 1 9.35 9.46 L4.24 14.37 A1.35 1.35 0 0 1 2.36 12.43 Z"/></svg>
<div class="t" style="left:437.82px;top:417.00px;font-family:'Liberation Sans';font-size:13.6px;font-weight:400;line-height:13.6px;color:#8f8f8f;letter-spacing:0.237px;-webkit-text-stroke:0.45px #8f8f8f">Rewrite</div>
<div class="t" style="left:459.82px;top:442.40px;font-family:'Liberation Sans';font-size:13.6px;font-weight:400;line-height:13.6px;color:#cccccc;letter-spacing:0.074px;-webkit-text-stroke:0.15px #cccccc">Convert to template string</div>
<svg style="left:438px;top:440.4px" width="16" height="16" viewBox="0 0 16 16" fill="none" stroke="#cccccc" stroke-width="1.1" stroke-linejoin="round"><path d="M2.36 12.43 L7.48 7.52 A4.1 4.1 0 0 1 13.14 2.19 L10.98 4.28 L12.72 6.07 L14.88 3.98 A4.1 4.1 0 0 1 9.35 9.46 L4.24 14.37 A1.35 1.35 0 0 1 2.36 12.43 Z"/></svg>
<div class="t" style="left:459.82px;top:466.50px;font-family:'Liberation Sans';font-size:13.6px;font-weight:400;line-height:13.6px;color:#cccccc;letter-spacing:0.110px;-webkit-text-stroke:0.15px #cccccc">Generate &#x27;get&#x27; and &#x27;set&#x27; accessors</div>
<svg style="left:438px;top:464.5px" width="16" height="16" viewBox="0 0 16 16" fill="none" stroke="#cccccc" stroke-width="1.1" stroke-linejoin="round"><path d="M2.36 12.43 L7.48 7.52 A4.1 4.1 0 0 1 13.14 2.19 L10.98 4.28 L12.72 6.07 L14.88 3.98 A4.1 4.1 0 0 1 9.35 9.46 L4.24 14.37 A1.35 1.35 0 0 1 2.36 12.43 Z"/></svg>
<div class="t" style="left:437.82px;top:490.40px;font-family:'Liberation Sans';font-size:13.6px;font-weight:400;line-height:13.6px;color:#8f8f8f;letter-spacing:0.017px;-webkit-text-stroke:0.45px #8f8f8f">Move</div>
<div class="t" style="left:459.82px;top:515.60px;font-family:'Liberation Sans';font-size:13.6px;font-weight:400;line-height:13.6px;color:#cccccc;letter-spacing:-0.051px;-webkit-text-stroke:0.15px #cccccc">Move to a new file</div>
<svg style="left:438px;top:513.6px" width="16" height="16" viewBox="0 0 16 16" fill="none" stroke="#cccccc" stroke-width="1.1" stroke-linejoin="round"><path d="M2.36 12.43 L7.48 7.52 A4.1 4.1 0 0 1 13.14 2.19 L10.98 4.28 L12.72 6.07 L14.88 3.98 A4.1 4.1 0 0 1 9.35 9.46 L4.24 14.37 A1.35 1.35 0 0 1 2.36 12.43 Z"/></svg>
<div class="t" style="left:459.82px;top:539.80px;font-family:'Liberation Sans';font-size:13.6px;font-weight:400;line-height:13.6px;color:#cccccc;letter-spacing:-0.001px;-webkit-text-stroke:0.15px #cccccc">Move to file</div>
<svg style="left:438px;top:537.8px" width="16" height="16" viewBox="0 0 16 16" fill="none" stroke="#cccccc" stroke-width="1.1" stroke-linejoin="round"><path d="M2.36 12.43 L7.48 7.52 A4.1 4.1 0 0 1 13.14 2.19 L10.98 4.28 L12.72 6.07 L14.88 3.98 A4.1 4.1 0 0 1 9.35 9.46 L4.24 14.37 A1.35 1.35 0 0 1 2.36 12.43 Z"/></svg>
<div class="t" style="left:436.35px;top:563.00px;font-family:'Liberation Sans';font-size:13px;font-weight:400;line-height:13px;color:#4aa5f5;letter-spacing:-0.193px;-webkit-text-stroke:0.15px #4aa5f5">Learn more about JS/TS refactorings</div>
</body></html>
